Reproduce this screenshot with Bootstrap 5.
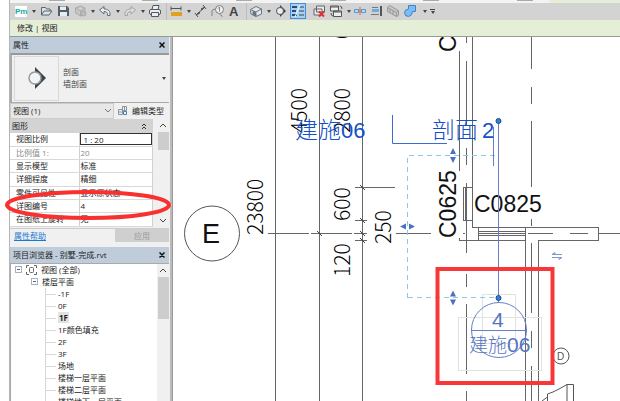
<!DOCTYPE html>
<html lang="zh-CN">
<head>
<meta charset="utf-8">
<meta name="viewport" content="width=device-width, initial-scale=1">
<title>别墅-完成.rvt</title>
<link href="https://cdn.jsdelivr.net/npm/bootstrap@5.3.0/dist/css/bootstrap.min.css" rel="stylesheet">
<style>
body{font-family:"Open Sans","Noto Sans CJK SC",sans-serif;font-size:8px;line-height:12px;color:#222;background:#fff}
.shell{padding-left:9px}
.shell-inner{border-left:1px solid #b5b5b5}
.ribbon-edge{height:3px;background:linear-gradient(90deg,#f3f3f3 540px,#e5efd7 0)}
.ribbon-edge i{width:16px;height:1px;background:#aaa}
.quickbar{height:17px;background:#d3d3d3;padding-left:3px;gap:1px}
.tool{width:16px;height:16px;padding:0;border:0;background:none;line-height:0;flex:none}
.tool svg{width:16px;height:16px;display:block}
.tool.on{background:#a9d0f2;outline:1px solid #3f8fdc;outline-offset:-1px}
.drop{width:7px;height:16px;padding:0;border:0;background:none;flex:none;display:flex;align-items:center;justify-content:center}
.drop::after{content:"";border:2px solid transparent;border-top:3px solid #444;border-bottom:0}
.last{flex-direction:column}
.last::before{content:"";width:5px;border-top:1px solid #444;margin-bottom:1px}
.sep{width:3px;height:17px;border-right:1px solid #bcbcbc;flex:none}
.sep.blank{border:0}
.context{height:17px;background:#e5efd7;border-bottom:1px solid #999;padding-left:7px}
.workspace{min-height:0}
.side{width:162px;background:#f0f0f0;border-right:2px solid #bbb;flex:none}
.side-inner{margin-right:1px}
.panel-head{height:16px;background:#bfcddb;padding:0 3px;flex:none}
.close-x{border:0;background:none;padding:0 1px;line-height:0}
.type-box{height:50px;border:1px solid #aaa;border-width:2px 0 1px 2px;border-top-color:#999;padding:2px;flex:none}
.type-name{color:#444}
.thumb{width:45px;height:45px;border:1px solid #d9d9d9;background:#f1f1f1}
.filter{height:16px;flex:none}
.filter select{width:104px;height:16px;font-size:8px;line-height:12px;border:1px solid #ccc;background:#e7e7e7;padding:0 2px;appearance:none;color:#222}
.pick{position:relative}
.pick svg{position:absolute;right:3px;top:6px;pointer-events:none}
.plain{border:0;background:none;padding:0;color:#222}
.gridhold{height:108px;overflow:hidden;flex:none}
.prop{width:100%;margin:0;border-collapse:collapse;background:#fff;table-layout:fixed}
.prop caption{caption-side:top;height:14px;padding:0 2px;background:#d3d3d3;color:#222;line-height:14px}
.prop th,.prop td{height:13px;padding:0;line-height:12px;font-weight:400;border-bottom:1px solid #d9d9d9;white-space:nowrap;overflow:hidden}
.prop th{width:69px;padding-left:6px}
.prop td{border-left:1px solid #d0d0d0;border-right:1px solid #d0d0d0;padding-left:1px}
.prop td.edit{padding:0}
.prop input{display:block;width:100%;height:12px;border:1px solid #333;padding:0 3px;font-size:8px;line-height:10px;color:#222}
.prop .dim th,.prop .dim td{color:#888}
.bar{width:12px;background:#f0f0f0;flex:none}
.bar b{display:block;width:11px;height:18px;background:#cdcdcd;flex:none}
.bar b.long{height:42px}
.helprow{height:15px;border-top:1px solid #ccc;margin-top:1px;margin-bottom:4px;flex:none}
.helprow a{color:#1a78d0}
.apply{width:54px;height:13px;border:0;background:#cfcfcf;color:#999;padding:0}
.tree{background:#fff;border:1px solid #aaa;border-right:0;border-bottom:0;min-height:0}
.tree ul{list-style:none;margin:0;padding:0}
.tree li{white-space:nowrap}
.tree .leaves{margin-left:34px;border-left:1px solid #d8d8d8}
.leaves li::before{content:"";display:inline-block;width:10px;border-top:1px solid #d8d8d8;vertical-align:middle;margin-right:2px}
.leaves .sel{background:#e2e2e2;font-weight:700;padding:0 1px}
.knob{width:7px;height:7px;border:1px solid #a9b0b8;background:#fff;flex:none}
.knob::after{content:"";display:block;width:3px;border-top:1px solid #4463a5;margin:2px 1px}
.mark-ring{position:absolute;left:-6px;top:153px;width:168px;height:32px;pointer-events:none}
.sheet{min-width:0;background:#fff;overflow:hidden;border-left:1px solid #999}
.sheet svg{display:block;width:100%;height:100%}
.han{font-family:"Noto Sans CJK SC",sans-serif;font-weight:300}
.tag-text{font-family:"Liberation Sans",Arial,sans-serif}
</style>
<script src="https://cdn.jsdelivr.net/npm/bootstrap@5.3.0/dist/js/bootstrap.bundle.min.js"></script>
</head>
<body>
<div class="shell vh-100 overflow-hidden">
<div class="shell-inner h-100 d-flex flex-column">
  <div class="ribbon-edge d-flex justify-content-around pe-5"><i></i><i></i><i></i><i></i><i></i><i></i></div>
  <nav class="quickbar d-flex align-items-center" aria-label="快速访问">
    <button class="tool" aria-label="PM"><svg viewBox="0 0 16 16"><rect x="2" y="3" width="12" height="11" rx="1" fill="#fff"/><text x="2" y="11" font-size="8" font-weight="700" fill="#16ada0" font-family="Liberation Sans">Pm</text></svg></button>
    <button class="drop" aria-label="更多"></button>
    <button class="tool" aria-label="打开"><svg viewBox="0 0 16 16" fill="#dbe4ea" stroke="#596670"><path d="M3.500 12V4.500h4l1 1.500h3.500v2M3.500 12l2.500-4h8l-3 4z"/></svg></button>
    <button class="tool" aria-label="保存"><svg viewBox="0 0 16 16"><path d="M3 3h9l2 2v8H3z" fill="#53606b"/><path d="M5 3.500h6v3.500H5zM5 9h7v4H5z" fill="#e8edf0"/></svg></button>
    <button class="tool" aria-label="同步"><svg viewBox="0 0 16 16" fill="#c6c6c6" stroke="#aaa"><path d="M3.500 5l5-2 4.500 2v5l-4.500 3-5-3zM3.500 5l5 2.500 4.500-2.500M8.500 7.500V13"/><circle cx="11.500" cy="10.500" r="2.500" fill="#bbb"/></svg></button>
    <button class="drop" aria-label="更多"></button>
    <button class="tool" aria-label="放弃"><svg viewBox="0 0 16 16" fill="#eee" stroke="#626c76"><path d="M2.500 7L7 3.500V6c4 0 6.500 2 6 6.500h-2.500C11 9.500 9.500 8.500 7 8.500V11z"/></svg></button>
    <button class="drop" aria-label="更多"></button>
    <button class="tool" aria-label="重做"><svg viewBox="0 0 16 16" fill="#ddd" stroke="#a4a4a4"><path d="M13.500 7L9 3.500V6c-4 0-6.500 2-6 6.500h2.500C5 9.500 6.500 8.500 9 8.500V11z"/></svg></button>
    <button class="drop" aria-label="更多"></button>
    <button class="tool" aria-label="打印"><svg viewBox="0 0 16 16" fill="#eee" stroke="#4f5963"><path d="M5 6.500l1-4h6l-1 4"/><rect x="2.500" y="6.500" width="11" height="5" rx="1.500"/><path d="M4.500 9.500h7v4h-7z"/></svg></button>
    <span class="sep"></span>
    <button class="tool" aria-label="测量"><svg viewBox="0 0 16 16"><path d="M3 5.500h10M3 3.500v4M13 3.500v4" stroke="#555"/><rect x="3" y="9" width="11" height="4" fill="#e0a11c"/></svg></button>
    <button class="drop" aria-label="更多"></button>
    <button class="tool" aria-label="对齐标注"><svg viewBox="0 0 16 16" stroke="#555" fill="#555"><path d="M3 12L12 4M2 10l3 4M10 2l3 4"/><path d="M3 12l4-2-1-1zM12 4l-4 2 1 1z"/></svg></button>
    <button class="tool" aria-label="标记"><svg viewBox="0 0 16 16" stroke="#808080" fill="#eee"><path d="M2 13V8q0-2 4-2" fill="none"/><circle cx="9.500" cy="6.500" r="4"/><path d="M9.500 4v4.500M8 5.500l1.500-1.500M9.500 11l3 2.500"/></svg></button>
    <button class="tool" aria-label="文字"><svg viewBox="0 0 16 16"><text x="2" y="13" font-family="Liberation Sans" font-weight="700" font-size="13" fill="#444">A</text></svg></button>
    <span class="sep"></span>
    <button class="tool" aria-label="三维视图"><svg viewBox="0 0 16 16" fill="#e5e8eb" stroke="#6b757f"><path d="M2.500 6.500L8 3.500l5.500 2.500V11L8 13.500l-5-2.500z"/><path d="M2.500 6.500L8 9l5.500-3"/><path d="M5 8.500v3l3 1.500V9.500z" fill="#68737e"/></svg></button>
    <button class="drop" aria-label="更多"></button>
    <button class="tool" aria-label="剖面"><svg viewBox="0 0 16 16"><path d="M7 2l6 6-6 6z" fill="#39434c"/><circle cx="7" cy="8" r="3.500" fill="#e9edf1" stroke="#555"/></svg></button>
    <button class="tool on" aria-label="细线"><svg viewBox="0 0 16 16"><path d="M2 4h5M2 8h4M2 12h5" stroke="#244b7b" stroke-width="2"/><path d="M9 4h5M9 8h5M9 12h5" stroke="#345"/><path d="M10 2L5 14" stroke="#fff"/></svg></button>
    <span class="sep blank"></span>
    <button class="tool" aria-label="关闭隐藏"><svg viewBox="0 0 16 16" fill="#e9e9e9" stroke="#5f666d"><path d="M5.500 3h8v6h-8zM3 6h8v6H3z"/><path d="M8 8.500l5 5m0-5l-5 5" stroke="#df3030" stroke-width="2"/></svg></button>
    <button class="tool" aria-label="切换窗口"><svg viewBox="0 0 16 16" fill="#eee" stroke="#555"><path d="M2.500 3h8v5h-8zM5.500 8h8v5.500h-8z"/><path d="M2.500 4h8M5.500 9h8M12 3q2 0 2 3M3 10q0 3 2 3" fill="none"/></svg></button>
    <button class="drop" aria-label="更多"></button>
    <button class="tool" aria-label="拆分"><svg viewBox="0 0 16 16" fill="#b7dafa" stroke="#4d9ad4"><path d="M1.500 6.500h4v3h-4zM8.500 6.500h4v3h-4z"/><path d="M7 4v8M5 8h4" stroke="#d1674a"/></svg></button>
    <button class="tool" aria-label="对齐"><svg viewBox="0 0 16 16"><path d="M2 4.500h6M1 11.500h8" stroke="#777"/><path d="M2 6h7v3H2z" fill="#69aee3"/><path d="M11 3v10" stroke="#555" stroke-width="2"/></svg></button>
    <button class="tool" aria-label="墙"><svg viewBox="0 0 16 16" fill="#c7c7c7" stroke="#999"><path d="M.500 4.500l2-2 9 5v5l-2 1-9-5zM.500 4.500l9 5v4M9.500 9.500l2-2M3 6v4M6 8v4"/></svg></button>
    <button class="tool" aria-label="连接"><svg viewBox="0 0 16 16" fill="#7dbcf0" stroke="#3b86c6"><path d="M4.500 2.500h7v6h-3q0 4-4 5-4 0-4-4 0-3 4-3.500z"/></svg></button>
    <button class="drop" aria-label="更多"></button>
    <button class="drop last" aria-label="自定义"></button>
  </nav>
  <div class="context d-flex align-items-center">修改 | 视图</div>

  <div class="workspace d-flex flex-fill">
    <aside class="side">
      <div class="side-inner h-100 d-flex flex-column position-relative">
        <div class="panel-head d-flex align-items-center justify-content-between"><span>属性</span>
          <button class="close-x" aria-label="关闭属性"><svg width="6" height="6" stroke="#111" stroke-width="1.500"><path d="M.500 .500l5 5M5.500 .500l-5 5"/></svg></button></div>
        <div class="type-box d-flex align-items-center">
          <div class="thumb d-flex align-items-center justify-content-center"><svg width="20" height="24"><path d="M8 1l11 11L8 23z" fill="#38434d"/><circle cx="8" cy="12" r="6" fill="#f2f4fa" stroke="#999" stroke-width="1.500"/></svg></div>
          <div class="type-name ms-1 flex-fill">剖面<br>墙剖面</div>
          <button class="drop" aria-label="选择类型"></button>
        </div>
        <div class="filter d-flex align-items-center">
          <div class="pick"><select aria-label="视图筛选"><option>视图 (1)</option></select><svg width="6" height="4" fill="none" stroke="#777"><path d="M0 0l3 3 3-3"/></svg></div>
          <button class="plain d-flex align-items-center ms-1"><svg width="10" height="11" fill="none" stroke="#8a949c"><path d="M.500 4.500h4v5h-4zM4.500 1.500h4v4h-4zM.500 7h4M6.500 1.500v4"/><path d="M5.500 6.500h3v3h-3z" stroke="#4b84bb"/></svg><span class="text-nowrap ps-1">编辑类型</span></button>
        </div>
        <div class="gridhold d-flex">
          <table class="prop flex-fill">
            <caption><span class="d-flex justify-content-between align-items-center">图形<svg class="me-1" width="5" height="6" fill="none" stroke="#333"><path d="M0 3l2-2 2 2M0 6l2-2 2 2"/></svg></span></caption>
            <tbody>
            <tr><th><label for="scale">视图比例</label></th><td class="edit"><input id="scale" value="1 : 20"></td></tr>
            <tr class="dim"><th>比例值 1:</th><td>20</td></tr>
            <tr><th>显示模型</th><td>标准</td></tr>
            <tr><th>详细程度</th><td>精细</td></tr>
            <tr><th>零件可见性</th><td>显示原状态</td></tr>
            <tr><th>详图编号</th><td>4</td></tr>
            <tr><th>在图纸上旋转</th><td>无</td></tr>
            </tbody>
          </table>
          <div class="bar d-flex flex-column align-items-center py-1 ms-1"><svg width="6" height="5" fill="none" stroke="#444"><path d="M0 4l3-3 3 3"/></svg><b class="mt-1"></b><svg class="mt-auto" width="6" height="5" fill="none" stroke="#444"><path d="M0 1l3 3 3-3"/></svg></div>
        </div>
        <div class="helprow d-flex align-items-center justify-content-between ps-1"><a href="#">属性帮助</a><button class="apply" disabled>应用</button></div>
        <div class="panel-head d-flex align-items-center justify-content-between"><span>项目浏览器 - 别墅-完成.rvt</span>
          <button class="close-x" aria-label="关闭项目浏览器"><svg width="6" height="6" stroke="#111" stroke-width="1.500"><path d="M.500 .500l5 5M5.500 .500l-5 5"/></svg></button></div>
        <div class="tree flex-fill d-flex overflow-hidden">
          <ul class="flex-fill h-100">
            <li><span class="d-flex align-items-center ps-1"><i class="knob"></i><svg class="mx-1" width="11" height="12" fill="none" stroke="#666"><path d="M.500 4V1.500H3M8 1.500h2.500V4M10.500 8v2.500H8M3 10.500H.500V8"/><rect x="3.500" y="3.500" width="4" height="5" rx="1"/></svg>视图 (全部)</span>
              <ul><li><span class="d-flex align-items-center ms-3"><i class="knob ms-1 me-1"></i><span>楼层平面</span></span>
                <ul class="leaves"><li>-1F</li><li>0F</li><li><span class="sel">1F</span></li><li>1F颜色填充</li><li>2F</li><li>3F</li><li>场地</li><li>楼梯一层平面</li><li>楼梯二层平面</li><li>楼梯地下一层平面</li></ul>
              </li></ul>
            </li>
          </ul>
          <div class="bar d-flex flex-column align-items-center pt-1"><svg class="flex-shrink-0" width="6" height="5" fill="none" stroke="#444"><path d="M0 4l3-3 3 3"/></svg><b class="long mt-1"></b></div>
        </div>
        <svg class="mark-ring" viewBox="0 0 168 32"><ellipse cx="84" cy="15" rx="81" ry="13" fill="none" stroke="#f83030" stroke-width="4"/></svg>
      </div>
    </aside>

    <main class="sheet flex-fill">
      <svg role="img" aria-label="平面图"><g transform="translate(-173,-37)">
        <g fill="none" stroke="#666" shape-rendering="crispEdges">
          <path d="M275.500 37V401M319.500 37V401M362.500 37V401"/>
          <path d="M268 233.500h41M311 233.500h41M354 233.500h13M396 233.500h35M355 187.500h40M355 220.500h12M355 240.500h12"/>
          <path d="M459.500 51V171M466.500 37v6M466.500 61v65M466.500 148v17M466.500 183v70M466.500 274v13M466.500 304v70M466.500 391v10M472.500 37V227"/>
          <path d="M531.500 37v32M531.500 87v17M531.500 121v66M531.500 219v7M531.500 243v70M531.500 331v17M531.500 366v35"/>
          <path d="M463 187.500h9M463 220.500h9M463.500 187v33M465.500 187v33M459.500 238v2.500H525.500V401M472 227.500H598.500V240.500H538.500V401M478.500 227v13M525.500 227v13M478 231.500h47M478 233.500h47M478 235.500h47"/>
          <path d="M528 233.500h25M570 233.500h18M599 233.500h21M463 233.500h2"/>
        </g>
        <path d="M317 231l5 5M360 185l5 5M360 218l5 5M360 231l5 5M360 238l5 5" stroke="#444"/>
        <g fill="none" stroke="#555"><circle cx="212" cy="233.500" r="27.500"/><circle cx="561" cy="356" r="8"/><path d="M542 401l5.500-4V394L553 392l6-3 8-4.500h6.500V401M567 384.500V401M547.500 397V401"/></g>
        <g fill="none" stroke="#e2e2e2"><rect x="458.500" y="317.500" width="83" height="53"/><rect x="482.500" y="294.500" width="33" height="49"/></g>
        <g class="han" font-size="21" fill="#000">
          <text transform="translate(263 235) rotate(-90)">23800</text>
          <text transform="translate(307 133) rotate(-90)">4500</text>
          <text transform="translate(350 133) rotate(-90)">2800</text>
          <text transform="translate(350 221) rotate(-90)">600</text>
          <text transform="translate(350 277) rotate(-90)">120</text>
          <text transform="translate(391 244) rotate(-90)">250</text>
          <text transform="translate(350 39) rotate(-90)">0</text>
        </g>
        <g class="tag-text" font-size="23" fill="#111"><text transform="translate(456 238) rotate(-90)">C0625</text><text transform="translate(456 52) rotate(-90)">C</text><text x="474" y="212">C0825</text></g>
        <text x="202" y="243" class="tag-text" font-size="27" fill="#111">E</text>
        <text x="557" y="360" class="tag-text" font-size="10" fill="#555">D</text>
        <g fill="none" stroke="#8bc9e8" stroke-dasharray="5 4" shape-rendering="crispEdges"><path d="M407.500 298V155.500H498M407.500 297.500H498"/></g>
        <path d="M392.500 115v28.500H447" fill="none" stroke="#3f6bd0"/>
        <g fill="none" stroke="#6480c6"><path d="M493.500 127v39M498.500 121V303M471 330.500h56"/><circle cx="499" cy="330" r="27.500"/></g>
        <g class="tag-text" font-size="22" fill="#1450c8"><text x="295" y="138"><tspan class="han" font-size="23">建施</tspan>06</text><text x="432" y="138"><tspan class="han" font-size="23">剖面</tspan><tspan x="482">2</tspan></text></g>
        <g class="tag-text" font-size="21" fill="#5674be"><text x="492" y="327">4</text><text x="469" y="352"><tspan class="han" font-size="19">建施</tspan>06</text></g>
        <g fill="#4c70c4"><path d="M450 154l3-6 3 6zM450 157l3 6 3-6zM450 296.500l3-6 3 6zM450 299.500l3 6 3-6zM406 223.500l-6 3 6 3zM409 223.500l6 3-6 3z"/></g>
        <g fill="#2f7fe0" stroke="#264d7c"><circle cx="498.500" cy="121" r="2.500"/><circle cx="498.500" cy="298" r="2.500"/></g>
        <path d="M562 254.500h-10l3-2v2M552 257.500h10l-3 2v-2" fill="none" stroke="#8296cc"/>
        <rect x="437.500" y="269" width="115" height="114" fill="none" stroke="#f83838" stroke-width="4"/>
      </g></svg>
    </main>
  </div>
</div>
</div>
</body>
</html>
